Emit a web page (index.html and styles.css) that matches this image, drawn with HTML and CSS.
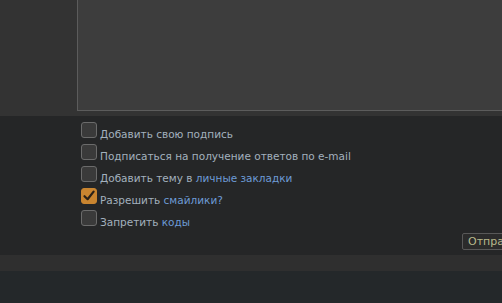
FILE: index.html
```html
<!DOCTYPE html>
<html>
<head>
<meta charset="utf-8">
<link rel="stylesheet" href="styles.css">
</head>
<body>
<div class="top">
  <div class="editor"></div>
</div>
<div class="opts">
  <label class="row"><span class="cb"></span><span class="lbl">Добавить свою подпись</span></label>
  <label class="row"><span class="cb"></span><span class="lbl">Подписаться на получение ответов по e-mail</span></label>
  <label class="row"><span class="cb"></span><span class="lbl">Добавить тему в <a class="lnk">личные закладки</a></span></label>
  <label class="row"><span class="cb on"><svg viewBox="0 0 16 16" width="16" height="16"><path d="M3.5 8.2 L6.6 11.2 L12.6 3.6" fill="none" stroke="#2a2118" stroke-width="2.2" stroke-linecap="round" stroke-linejoin="round"/></svg></span><span class="lbl">Разрешить <a class="lnk">смайлики?</a></span></label>
  <label class="row"><span class="cb"></span><span class="lbl">Запретить <a class="lnk">коды</a></span></label>
  <div class="actions"><button class="btn">Отправить</button></div>
</div>
<div class="band"></div>
<div class="rest"></div>
</body>
</html>
```
FILE: styles.css
```css
html, body {
  margin: 0;
  padding: 0;
  background: #24282a;
  font-family: "DejaVu Sans", Verdana, sans-serif;
  font-size: 10.5px;
  overflow: hidden;
}
.top {
  height: 116px;
  background: #333333;
  padding-left: 77px;
  box-sizing: border-box;
}
.editor {
  height: 111px;
  width: 500px;
  background: #3d3d3d;
  border: 1px solid #5c5c5c;
  border-top: none;
  box-sizing: border-box;
}
.opts {
  background: #252627;
  height: 139px;
  padding: 6px 0 0 81px;
  box-sizing: border-box;
}
.row {
  display: flex;
  align-items: flex-end;
  height: 16px;
  margin-bottom: 6px;
}
.cb {
  width: 16px;
  height: 16px;
  box-sizing: border-box;
  border: 1px solid #6b6b6b;
  border-radius: 3px;
  background: #3a3a3a;
  flex: none;
  display: flex;
}
.cb.on {
  background: #c98530;
  border-color: #c98530;
}
.cb svg { margin: -1px; }
.lbl {
  margin-left: 3px;
  margin-bottom: -3px;
  color: #a3b1be;
  line-height: 13px;
  white-space: nowrap;
}
.lnk {
  color: #6d9bd6;
  text-decoration: none;
}
.actions {
  display: flex;
  justify-content: flex-start;
  padding-left: 381px;
  margin-top: 7px;
}
.btn {
  height: 17px;
  padding: 0 5px;
  background: #2b2b2b;
  border: 1px solid #585858;
  border-radius: 2px;
  color: #b8b98b;
  font-family: "DejaVu Sans", Verdana, sans-serif;
  font-size: 11px;
  line-height: 15px;
  white-space: nowrap;
}
.band {
  height: 16px;
  background: #2f2f2f;
}
.rest {
  height: 40px;
  background: #24282a;
}
```
